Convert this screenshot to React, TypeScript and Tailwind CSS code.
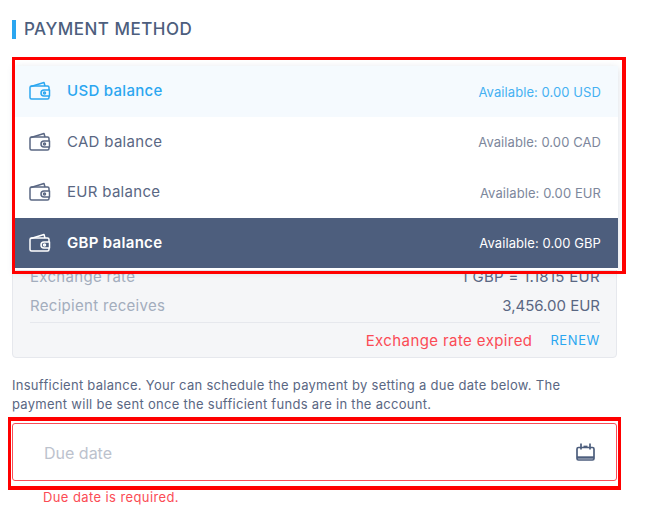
const font = { fontFamily: '"Inter", "Open Sans", sans-serif' }

const rows = [
  { name: "USD balance", avail: "Available: 0.00 USD", box: "bg-[#f5fafe] text-[#2ba6f0] font-medium", sub: "text-[#45b1f2] font-normal" },
  { name: "CAD balance", avail: "Available: 0.00 CAD", box: "bg-white text-[#5a6783]", sub: "text-[#7d879c]" },
  { name: "EUR balance", avail: "Available: 0.00 EUR", box: "bg-white text-[#5a6783]", sub: "text-[#7d879c]" },
  { name: "GBP balance", avail: "Available: 0.00 GBP", box: "bg-[#4d5e7d] text-white font-semibold", sub: "text-white font-normal" },
]

function WalletIcon() {
  return (
    <svg width="22" height="20" viewBox="0 0 22 20" fill="none" stroke="currentColor" strokeWidth="1.5" strokeLinejoin="round" className="shrink-0">
      <path d="M2 5.5 L15 1.5 L16 5" />
      <path d="M20 9V6.5a1.5 1.5 0 0 0-1.5-1.5H2.5A1.5 1.5 0 0 0 1 6.5v10A1.5 1.5 0 0 0 2.5 18h16a1.5 1.5 0 0 0 1.5-1.5V15" />
      <path d="M20.5 9h-5.5a3 3 0 0 0 0 6h5.5z" />
      <circle cx="15.5" cy="12" r="1" />
    </svg>
  )
}

function CalendarIcon() {
  return (
    <svg width="19" height="18" viewBox="0 0 19 18" fill="none" stroke="#4d5e7d" strokeWidth="1.7">
      <rect x="1" y="4.5" width="17" height="12.5" rx="1.5" />
      <path d="M1 14.5h17" strokeWidth="2.4" />
      <path d="M5 0.5v6M14 0.5v6" />
      <path d="M7.5 3.5h4" />
    </svg>
  )
}

export default function App() {
  return (
    <div style={font} className="h-[518px] w-[646px] overflow-hidden bg-white pl-3 pt-5 text-[#5a6783]">
      <div className="flex h-[19px] items-center border-l-4 border-[#2ba6f0] pl-2 text-[17px] font-medium tracking-[0.5px] text-[#4d5e7d]">
        PAYMENT METHOD
      </div>

      <div className="relative mt-[27px] w-[605px]">
        <div className="h-[292px] rounded-sm border border-[#e6e8ed] bg-[#f5f6f8] pl-[17px] pr-[16px] pt-[195px] text-[15px]">
          <div className="flex h-[30px] items-center justify-between text-[#a3adbd]">
            <span className="tracking-[0.3px]">Exchange rate</span>
            <span className="tracking-[0.3px] text-[#5a6783]">1 GBP = 1.1815 EUR</span>
          </div>
          <div className="flex h-[28px] items-center justify-between text-[#a3adbd]">
            <span className="tracking-[0.3px]">Recipient receives</span>
            <span className="text-[#5a6783]">3,456.00 EUR</span>
          </div>
          <div className="mt-[2px] flex h-[34px] items-center justify-end gap-[18px] border-t border-[#e6e8ed] pt-[3px]">
            <span className="tracking-[0.4px] text-[#fb4b55]">Exchange rate expired</span>
            <span className="text-[13px] tracking-[0.6px] text-[#2ba6f0]">RENEW</span>
          </div>
        </div>

        {/* dropdown sits over the card */}
        <div className="absolute left-[3px] top-0 w-[603px] shadow-[0_2px_8px_rgba(77,94,125,0.2)]">
          <div className="bg-white pb-[2px]">
            {rows.map((r) => (
              <div key={r.name} className={`flex h-[50.5px] items-center pl-[14px] pr-[17px] ${r.box}`}>
                <WalletIcon />
                <span className="ml-[16px] flex-1 text-[15px] tracking-[0.3px]">{r.name}</span>
                <span className={`mt-[2px] text-[13px] tracking-[0.08px] ${r.sub}`}>{r.avail}</span>
              </div>
            ))}
          </div>
          <div className="absolute -bottom-[4px] -left-[3px] -right-[8px] -top-[9px] border-[3px] border-r-4 border-[#f00]" />
        </div>
      </div>

      <p className="mt-[18px] w-[605px] text-[13px] leading-[19px] tracking-[0.28px] text-[#5a6783]">
        Insufficient balance. Your can schedule the payment by setting a due date below. The payment will be sent once the sufficient funds are in the account.
      </p>

      <div className="mt-[9px] w-[605px]">
        <div className="relative flex h-[58px] items-center justify-between rounded-[3px] border border-[#fb4b55] pl-[31px] pr-[21px]">
          <span className="mt-[1px] text-[16px] text-[#bcc2cd]">Due date</span>
          <CalendarIcon />
          <div className="absolute -bottom-[10px] -left-[5px] -right-[5px] -top-[7px] border-x-[3px] border-y-4 border-[#f00]" />
        </div>
        <div className="mt-[8px] pl-[31px] text-[13px] leading-[16px] tracking-[0.4px] text-[#fb4b55]">Due date is required.</div>
      </div>
    </div>
  )
}
